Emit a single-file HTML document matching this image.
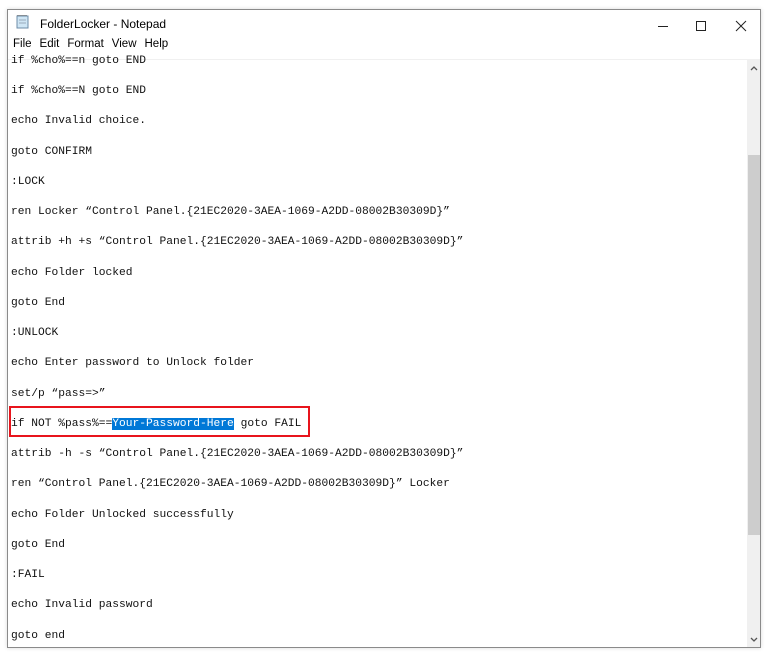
<!DOCTYPE html>
<html><head><style>
body{margin:0;width:768px;height:653px;background:#fff;position:relative;overflow:hidden;font-family:"Liberation Sans",sans-serif}
.win{position:absolute;left:7px;top:9px;width:752px;height:637px;border:1px solid #8a8a8a;background:#fff;box-shadow:0 0 4px rgba(0,0,0,.15)}
.title{position:absolute;left:32px;top:7px;font-size:12px;color:#000}
.menu{position:absolute;top:28px;left:5px;font-size:11.5px;color:#000}
.menu span{margin-right:8px}
.sep{position:absolute;top:49px;left:0;right:0;height:1px;background:#f0f0f0}
.sb{position:absolute;right:0;top:50px;width:13px;bottom:0;background:#f0f0f0}
.thumb{position:absolute;left:1px;right:0;top:95px;height:380px;background:#cdcdcd}
.code{position:absolute;left:11px;top:3px;font-family:"Liberation Mono",monospace;font-size:11.25px;color:#111;white-space:pre}
.code div{position:absolute;left:0;white-space:pre}
.hl{background:#0078d7;color:#fff}
.red{position:absolute;left:9px;top:406px;width:297px;height:27px;border:2px solid #e8141c}
</style></head><body>
<div class="win">
<svg style="position:absolute;left:8px;top:5px" width="13" height="14"><rect x="1" y="1" width="11" height="12" fill="#cfe6f5" stroke="#6c8ca8"/><line x1="3" y1="5" x2="10" y2="5" stroke="#9ab"/><line x1="3" y1="8" x2="10" y2="8" stroke="#9ab"/><path d="M2 1v-1M4 1v-1M6 1v-1M8 1v-1M10 1v-1" stroke="#555"/></svg>
<div class="title">FolderLocker - Notepad</div>
<svg style="position:absolute;left:650px;top:9px" width="100" height="14" fill="none" stroke="#222" stroke-width="1"><line x1="0" y1="7.5" x2="10" y2="7.5"/><rect x="38.5" y="2.5" width="9" height="9"/><path d="M78 2l10 10M88 2l-10 10"/></svg>
<div class="menu"><span>File</span><span>Edit</span><span>Format</span><span>View</span><span>Help</span></div>
<div class="sep"></div>
<div class="sb"><div class="thumb"></div>
<svg style="position:absolute;left:3px;top:6px" width="8" height="5"><path d="M1 4l3-3 3 3" stroke="#555" fill="none" stroke-width="1.3"/></svg>
<svg style="position:absolute;left:3px;bottom:5px" width="8" height="5"><path d="M1 1l3 3 3-3" stroke="#555" fill="none" stroke-width="1.3"/></svg>
</div>
</div>
<div class="code">
<div style="top:52px">if %cho%==n goto END</div>
<div style="top:82px">if %cho%==N goto END</div>
<div style="top:112px">echo Invalid choice.</div>
<div style="top:143px">goto CONFIRM</div>
<div style="top:173px">:LOCK</div>
<div style="top:203px">ren Locker “Control Panel.{21EC2020-3AEA-1069-A2DD-08002B30309D}”</div>
<div style="top:233px">attrib +h +s “Control Panel.{21EC2020-3AEA-1069-A2DD-08002B30309D}”</div>
<div style="top:264px">echo Folder locked</div>
<div style="top:294px">goto End</div>
<div style="top:324px">:UNLOCK</div>
<div style="top:354px">echo Enter password to Unlock folder</div>
<div style="top:385px">set/p “pass=&gt;”</div>
<div style="top:415px">if NOT %pass%==<span class="hl">Your-Password-Here</span> goto FAIL</div>
<div style="top:445px">attrib -h -s “Control Panel.{21EC2020-3AEA-1069-A2DD-08002B30309D}”</div>
<div style="top:475px">ren “Control Panel.{21EC2020-3AEA-1069-A2DD-08002B30309D}” Locker</div>
<div style="top:506px">echo Folder Unlocked successfully</div>
<div style="top:536px">goto End</div>
<div style="top:566px">:FAIL</div>
<div style="top:596px">echo Invalid password</div>
<div style="top:627px">goto end</div>
</div>
<div class="red"></div>
</body></html>
